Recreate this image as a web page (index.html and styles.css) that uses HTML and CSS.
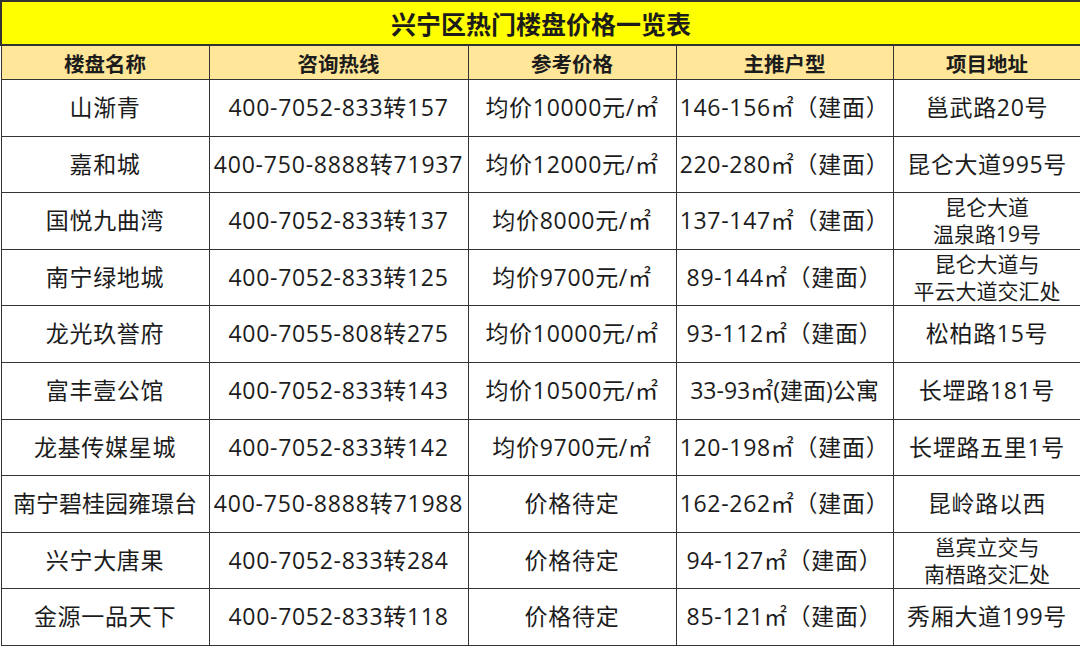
FILE: index.html
```html
<!DOCTYPE html>
<html lang="zh-CN">
<head>
<meta charset="utf-8">
<title>兴宁区热门楼盘价格一览表</title>
<link rel="stylesheet" href="styles.css">
</head>
<body>
<table class="price-table">
  <colgroup>
    <col class="c1"><col class="c2"><col class="c3"><col class="c4"><col class="c5">
  </colgroup>
  <thead>
    <tr class="title-row"><th colspan="5">兴宁区热门楼盘价格一览表</th></tr>
    <tr class="head-row"><th>楼盘名称</th><th>咨询热线</th><th>参考价格</th><th>主推户型</th><th>项目地址</th></tr>
  </thead>
  <tbody>
    <tr><td>山渐青</td><td>400-7052-833转157</td><td>均价10000元/㎡</td><td>146-156㎡（建面）</td><td>邕武路20号</td></tr>
    <tr><td>嘉和城</td><td class="long">400-750-8888转71937</td><td>均价12000元/㎡</td><td>220-280㎡（建面）</td><td>昆仑大道995号</td></tr>
    <tr><td>国悦九曲湾</td><td>400-7052-833转137</td><td>均价8000元/㎡</td><td>137-147㎡（建面）</td><td class="two">昆仑大道<br>温泉路19号</td></tr>
    <tr><td>南宁绿地城</td><td>400-7052-833转125</td><td>均价9700元/㎡</td><td>89-144㎡（建面）</td><td class="two">昆仑大道与<br>平云大道交汇处</td></tr>
    <tr><td>龙光玖誉府</td><td>400-7055-808转275</td><td>均价10000元/㎡</td><td>93-112㎡（建面）</td><td>松柏路15号</td></tr>
    <tr><td>富丰壹公馆</td><td>400-7052-833转143</td><td>均价10500元/㎡</td><td class="tight">33-93㎡(建面)公寓</td><td>长堽路181号</td></tr>
    <tr><td>龙基传媒星城</td><td>400-7052-833转142</td><td>均价9700元/㎡</td><td>120-198㎡（建面）</td><td>长堽路五里1号</td></tr>
    <tr><td class="tight">南宁碧桂园雍璟台</td><td class="long">400-750-8888转71988</td><td>价格待定</td><td>162-262㎡（建面）</td><td>昆岭路以西</td></tr>
    <tr><td>兴宁大唐果</td><td>400-7052-833转284</td><td>价格待定</td><td>94-127㎡（建面）</td><td class="two">邕宾立交与<br>南梧路交汇处</td></tr>
    <tr><td>金源一品天下</td><td>400-7052-833转118</td><td>价格待定</td><td>85-121㎡（建面）</td><td>秀厢大道199号</td></tr>
  </tbody>
</table>
</body>
</html>
```

FILE: styles.css
```css
html, body {
  margin: 0;
  padding: 0;
  background: #ffffff;
}

.price-table {
  width: 1080px;
  table-layout: fixed;
  border-collapse: collapse;
  font-family: "Open Sans", "Noto Sans CJK SC", sans-serif;
  color: #1c1c1c;
}

.c1 { width: 208px; }
.c2 { width: 259px; }
.c3 { width: 208px; }
.c4 { width: 217px; }
.c5 { width: 188px; }

.price-table th,
.price-table td {
  border: 1px solid #333333;
  text-align: center;
  padding: 0;
  white-space: nowrap;
  overflow: hidden;
}

.title-row th {
  height: 42px;
  background: #ffff00;
  font-family: "Noto Sans CJK SC", sans-serif;
  font-size: 25px;
  font-weight: 700;
  border-width: 2px;
}

.head-row th {
  height: 33px;
  background: #ffe699;
  font-family: "Noto Sans CJK SC", sans-serif;
  font-size: 20.5px;
  font-weight: 700;
}

.price-table td {
  height: 55.6px;
  font-size: 23px;
  line-height: 1.2;
  letter-spacing: 0.7px;
}

.price-table td.long {
  letter-spacing: 0.8px;
}

.price-table td.tight {
  letter-spacing: 0;
}

.price-table td.two {
  font-size: 21px;
  line-height: 27px;
  letter-spacing: 0;
}
```
